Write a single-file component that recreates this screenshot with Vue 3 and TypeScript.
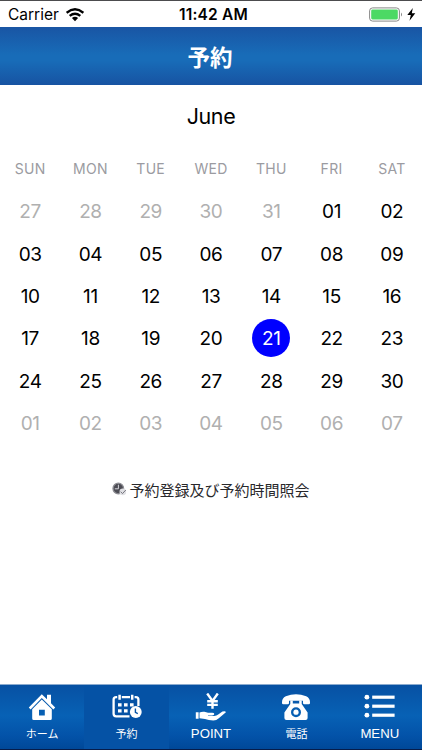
<script setup lang="ts">
interface Day {
  label: string
  muted: boolean
  selected: boolean
}

const weekdays: string[] = ['SUN', 'MON', 'TUE', 'WED', 'THU', 'FRI', 'SAT']

const DAYS_BEFORE = 5
const DAYS_IN_MONTH = 30
const DAYS_IN_PREVIOUS = 31
const TODAY = 21

const days: Day[] = Array.from({ length: 42 }, (_, i) => {
  const n = i - DAYS_BEFORE + 1
  const muted = n < 1 || n > DAYS_IN_MONTH
  const value = n < 1 ? DAYS_IN_PREVIOUS + n : n > DAYS_IN_MONTH ? n - DAYS_IN_MONTH : n
  return { label: String(value).padStart(2, '0'), muted, selected: n === TODAY }
})
</script>

<template>
  <div class="screen">
    <div class="status">
      <div class="carrier">
        <span>Carrier</span>
        <svg class="wifi" width="18" height="14" viewBox="0 0 18 14">
          <path d="M.6 4.7Q9-2.1 17.4 4.7M3.7 7.9Q9 3.6 14.3 7.9" fill="none" stroke="#000" stroke-width="2.4" />
          <path d="M5.9 10.1Q9 7.5 12.1 10.1L9 13.3Z" fill="#000" />
        </svg>
      </div>
      <div class="time">11:42 AM</div>
      <div class="power">
        <svg width="34" height="15" viewBox="0 0 34 15">
          <rect x=".6" y=".9" width="29.8" height="13.2" rx="3" fill="#fff" stroke="#888" />
          <rect x="2.2" y="2.6" width="26.6" height="9.8" rx="1.3" fill="#4cd964" />
          <path d="M32 5.4Q34 7.5 32 9.6Z" fill="#888" />
        </svg>
        <svg width="9" height="13" viewBox="0 0 9 13">
          <path d="M5.8 0L.3 7H3.8L2.5 12.8L8.3 5.3H4.8Z" fill="#000" />
        </svg>
      </div>
    </div>

    <header class="header">予約</header>

    <main class="content">
      <div class="month">June</div>
      <div class="weekdays">
        <span v-for="w in weekdays" :key="w">{{ w }}</span>
      </div>
      <div class="days">
        <span v-for="(d, i) in days" :key="i" class="day" :class="{ muted: d.muted, selected: d.selected }">
          <span class="num">{{ d.label }}</span>
        </span>
      </div>
      <div class="link">
        <svg width="15" height="14" viewBox="0 0 15 14">
          <circle cx="6.3" cy="6.5" r="5.3" fill="#4c4c54" stroke="#8c8c92" stroke-width="1.3" />
          <path d="M6.4 2.7V6.8H2.8" fill="none" stroke="#d5d5da" stroke-width="1" />
          <circle cx="10.8" cy="9.9" r="3.3" fill="#e0e0e4" />
          <path d="M8.7 9.7L10.5 11.6L13.8 8" fill="none" stroke="#77777f" stroke-width="1" />
        </svg>
        <span>予約登録及び予約時間照会</span>
      </div>
    </main>

    <nav class="tabs">
      <div class="tab">
        <svg width="30" height="28" viewBox="0 0 30 28" fill="#fff">
          <path d="M1.8 14.4L14.8 1.2L20 6.2V1.8H24V10.2L28.2 14.4L26.4 16.4L14.8 5L3.6 16.4Z" />
          <path fill-rule="evenodd" d="M14.8 6.5L24.8 16.3V25.5Q24.8 27 23.3 27H6.7Q5.2 27 5.2 25.5V16.3ZM12 16.7V22.4H17.8V16.7Z" />
        </svg>
        <span class="caption">ホーム</span>
      </div>
      <div class="tab active">
        <svg width="30" height="28" viewBox="0 0 30 28" fill="#fff">
          <path d="M17.5 23.3H4.2Q1.6 23.3 1.6 20.8V6.6Q1.6 4.1 4.2 4.1H5.2M9.8 4.1H18M22.6 4.1H23.8Q26.4 4.1 26.4 6.6V13" fill="none" stroke="#fff" stroke-width="2.3" />
          <path d="M7.6 1.8V6.8M20.2 1.8V6.8" stroke="#fff" stroke-width="2.5" />
          <path d="M6 10.2H9.6V13.4H6ZM12 10.2H15.6V13.4H12ZM18 10.2H21.6V13.4H18ZM6 16.3H9.6V19.5H6ZM12 16.3H15.6V19.5H12Z" />
          <circle cx="23.8" cy="19" r="5.9" />
          <path d="M23.4 15.6V19.4L25.8 20.6" fill="none" stroke="#0754a6" stroke-width="1.4" />
        </svg>
        <span class="caption">予約</span>
      </div>
      <div class="tab">
        <svg width="32" height="28" viewBox="0 0 32 28" fill="#fff">
          <path d="M12.2 .5L17.5 8L22.8 .5M17.5 8V15.8M12.2 8.3H22.8M12.2 11.9H22.8" fill="none" stroke="#fff" stroke-width="2.4" />
          <path d="M.8 19.3H3.6V25.7H.8ZM4.5 19.5Q7 18.4 9.4 18.8L13 19.8H17.1Q19.3 19.8 19.3 21.1Q19.3 22.4 17 22.6H13V23.1H19.3Q21.5 22.8 23.2 21.4L27.4 18.6Q30.6 17.6 30.9 19.2L23.8 25.2Q21.5 27.5 18.3 27.5Q13.5 27.3 10 26L4.5 25.3Z" />
        </svg>
        <span class="caption latin">POINT</span>
      </div>
      <div class="tab phone">
        <svg width="32" height="28" viewBox="0 0 32 28" fill="#fff">
          <path d="M2 9.2Q2 5 5.8 3.2Q16-.6 26.2 3.2Q30 5 30 9.2V10Q30 11.2 28.7 11.2H24.3Q23 11.2 23 10V7.8H9V10Q9 11.2 7.7 11.2H3.3Q2 11.2 2 10Z" />
          <path fill-rule="evenodd" d="M10.3 7.5H12.8V10.4H19.2V7.5H21.7V11L27.6 19.5V25Q27.6 27 25.6 27H6.4Q4.4 27 4.4 25V19.5L10.3 11ZM16 14.2A5 5 0 1 0 16 24.2A5 5 0 1 0 16 14.2Z" />
          <circle cx="16" cy="19.2" r="2.6" />
        </svg>
        <span class="caption">電話</span>
      </div>
      <div class="tab">
        <svg width="32" height="28" viewBox="0 0 32 28" fill="#fff">
          <g v-for="y in [4.2, 13.2, 22.2]" :key="y">
            <circle cx="2.9" :cy="y" r="2.4" />
            <rect x="8.2" :y="y - 1.6" width="22.4" height="3.2" />
          </g>
        </svg>
        <span class="caption latin">MENU</span>
      </div>
    </nav>
  </div>
</template>

<style>
body {
  margin: 0;
  background: #fff;
}
</style>

<style scoped>
.screen {
  box-sizing: border-box;
  width: 422px;
  height: 750px;
  display: flex;
  flex-direction: column;
  border-top: 1px solid #4c4c4e;
  background: #fff;
  color: #000;
  font-family: Inter, "Noto Sans CJK JP", sans-serif;
  overflow: hidden;
}

.status {
  height: 26px;
  display: grid;
  grid-template-columns: 1fr auto 1fr;
  align-items: center;
  padding: 1px 6px 0 8px;
  box-sizing: border-box;
  font-size: 15.5px;
}

.carrier {
  display: flex;
  align-items: center;
  gap: 7px;
}

.time {
  padding-left: 3px;
  font-weight: 600;
  font-size: 15.5px;
  letter-spacing: 0.2px;
}

.power {
  display: flex;
  align-items: center;
  justify-content: flex-end;
  gap: 4px;
}

.header {
  box-sizing: border-box;
  height: 58px;
  flex: none;
  display: flex;
  align-items: center;
  justify-content: center;
  padding-right: 2px;
  background: linear-gradient(#1955a4, #186cb8 48%, #186cb8 58%, #1753a2);
  color: #fff;
  font-family: "Noto Sans CJK JP", sans-serif;
  font-size: 22.5px;
  font-weight: 700;
}

.content {
  flex: 1;
  display: flex;
  flex-direction: column;
}

.month {
  height: 63px;
  line-height: 63px;
  text-align: center;
  font-size: 21.5px;
  letter-spacing: -0.4px;
}

.weekdays,
.days {
  display: grid;
  grid-template-columns: repeat(7, 1fr);
  text-align: center;
}

.weekdays {
  height: 42px;
  line-height: 41px;
  color: #9b9ba1;
  font-size: 14px;
  letter-spacing: 0.3px;
}

.days {
  grid-auto-rows: 42.35px;
  font-size: 19px;
  letter-spacing: -0.4px;
}

.day {
  display: flex;
  align-items: center;
  justify-content: center;
}

.num {
  box-sizing: border-box;
  width: 38px;
  height: 38px;
  padding-top: 1px;
  line-height: 38px;
  border-radius: 50%;
}

.muted {
  color: #b0b0b0;
}

.selected .num {
  background: #00f;
  color: #fff;
}

.link {
  display: flex;
  align-items: center;
  justify-content: center;
  gap: 2px;
  margin-top: 33px;
  height: 24px;
  color: #28282b;
  font-family: "Noto Sans CJK JP", sans-serif;
  font-size: 15px;
}

.tabs {
  box-sizing: border-box;
  height: 66px;
  flex: none;
  display: grid;
  grid-template-columns: repeat(5, 1fr);
  border-top: 1px solid #8babcf;
  border-bottom: 1px solid #061c4a;
  background: linear-gradient(#0751a3, #0761b5 48%, #0352a8 80%, #004898);
}

.tab {
  display: flex;
  flex-direction: column;
  align-items: center;
  padding-top: 8px;
  color: #fff;
}

.active {
  background: #0552a5;
}

.phone {
  padding-left: 2px;
}

.caption {
  height: 20px;
  line-height: 20px;
  margin-top: 2px;
  font-family: "Noto Sans CJK JP", sans-serif;
  font-size: 11px;
}

.latin {
  margin-top: 3px;
  font-family: "Liberation Sans", Arial, sans-serif;
  font-size: 13.2px;
}
</style>
